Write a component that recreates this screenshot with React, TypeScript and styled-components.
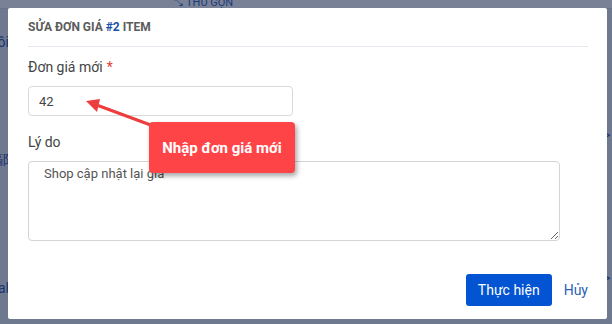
import styled, { createGlobalStyle } from 'styled-components'

const GlobalStyle = createGlobalStyle`
  html, body {
    margin: 0;
    padding: 0;
    font-family: Roboto, "Noto Sans", "Liberation Sans", sans-serif;
  }
  * {
    box-sizing: border-box;
  }
`

const Page = styled.div`
  width: 612px;
  height: 324px;
  background: #e6e8ee;
  display: flex;
  flex-direction: column;
  overflow: hidden;
`

const PageTop = styled.div`
  height: 20px;
  background: #ffffff;
  border-bottom: 1px solid #d6d9e2;
  display: flex;
  align-items: flex-start;
  padding-left: 174px;
`

const Collapse = styled.span`
  font-size: 11px;
  line-height: 11px;
  color: #1b4fb8;
  margin-top: -3px;
  display: flex;
  gap: 3px;
`

const PageBody = styled.div`
  flex: 1;
  display: flex;
  justify-content: space-between;
`

const SideStrip = styled.div<{ $align: 'start' | 'end' }>`
  width: 9px;
  overflow: hidden;
  display: flex;
  flex-direction: column;
  align-items: ${(p) => (p.$align === 'end' ? 'flex-end' : 'flex-start')};
  padding-top: 24px;
  color: #1a3f99;
  font-size: 14px;
  white-space: nowrap;
`

const StripRow = styled.div<{ $h: number }>`
  height: ${(p) => p.$h}px;
  flex-shrink: 0;
  display: flex;
  align-items: center;
`

const Overlay = styled.div`
  position: fixed;
  inset: 0;
  background: rgba(30, 45, 80, 0.6);
  padding: 8px 5px 5px 8px;
`

const Modal = styled.div`
  position: relative;
  width: 599px;
  height: 311px;
  background: #ffffff;
  border-radius: 2px;
  padding: 0 19px 0 20px;
  display: flex;
  flex-direction: column;
`

const Header = styled.div`
  height: 39px;
  border-bottom: 1px solid #e6e7ef;
  display: flex;
  align-items: center;
  font-size: 12px;
  font-weight: 700;
  color: #5b5b5b;
  text-transform: uppercase;
`

const ItemNo = styled.span`
  color: #1a4fa8;
  margin: 0 3px;
`

const Field = styled.div<{ $top: number }>`
  display: flex;
  flex-direction: column;
  margin-top: ${(p) => p.$top}px;
`

const Label = styled.label`
  font-size: 14px;
  line-height: 20px;
  color: #444444;
  margin-bottom: 9px;
`

const Required = styled.span`
  color: #e53935;
  margin-left: 4px;
`

const TextInput = styled.input`
  width: 265px;
  height: 30px;
  border: 1px solid #d9d9d9;
  border-radius: 4px;
  padding: 0 10px;
  font-family: inherit;
  font-size: 13px;
  color: #444444;
  outline: none;
`

const TextArea = styled.textarea`
  width: 532px;
  height: 80px;
  border: 1px solid #d4d4d4;
  border-radius: 4px;
  padding: 3px 15px;
  font-family: inherit;
  font-size: 13px;
  line-height: 18px;
  color: #555555;
  resize: vertical;
  outline: none;
`

const Footer = styled.div`
  margin-top: 33px;
  display: flex;
  justify-content: flex-end;
  align-items: center;
  gap: 12px;
`

const PrimaryButton = styled.button`
  height: 32px;
  padding: 0 12px;
  border: none;
  border-radius: 3px;
  background: #0354d3;
  color: #ffffff;
  font-family: inherit;
  font-size: 14px;
`

const LinkButton = styled.button`
  border: none;
  background: none;
  padding: 0;
  color: #2b5fb3;
  font-family: inherit;
  font-size: 14px;
`

const Callout = styled.div`
  position: absolute;
  left: 141px;
  top: 114px;
  width: 146px;
  height: 51px;
  border-radius: 4px;
  background: #ff4447;
  color: #ffffff;
  font-size: 15px;
  font-weight: 700;
  display: flex;
  align-items: center;
  justify-content: center;
  box-shadow: 2px 3px 5px rgba(0, 0, 0, 0.35);
`

const ArrowLayer = styled.svg`
  position: absolute;
  left: 0;
  top: 0;
  pointer-events: none;
`

export default function App() {
  return (
    <>
      <GlobalStyle />
      <Page>
        <PageTop>
          <Collapse>
            <span>⤡</span>
            <span>THU GỌN</span>
          </Collapse>
        </PageTop>
        <PageBody>
          <SideStrip $align="end">
            <StripRow $h={18}>Hồi</StripRow>
            <StripRow $h={218}>鄗</StripRow>
            <StripRow $h={38}>Thực tế tổng cộng al</StripRow>
          </SideStrip>
          <SideStrip $align="start">
            <StripRow $h={92} />
            <StripRow $h={20}>&gt;</StripRow>
            <StripRow $h={266}>&gt;</StripRow>
          </SideStrip>
        </PageBody>
      </Page>
      <Overlay>
        <Modal>
          <Header>
            Sửa đơn giá<ItemNo>#2</ItemNo>item
          </Header>
          <Field $top={10}>
            <Label>
              Đơn giá mới<Required>*</Required>
            </Label>
            <TextInput defaultValue="42" />
          </Field>
          <Field $top={16}>
            <Label>Lý do</Label>
            <TextArea defaultValue="Shop cập nhật lại giá" />
          </Field>
          <Footer>
            <PrimaryButton>Thực hiện</PrimaryButton>
            <LinkButton>Hủy</LinkButton>
          </Footer>
          <ArrowLayer width="599" height="311" viewBox="0 0 599 311">
            <line x1="90" y1="97.5" x2="148" y2="119" stroke="#ee3d3f" strokeWidth="3" />
            <polygon points="78,93 92,91 89,104" fill="#ee3d3f" />
          </ArrowLayer>
          <Callout>Nhập đơn giá mới</Callout>
        </Modal>
      </Overlay>
    </>
  )
}
